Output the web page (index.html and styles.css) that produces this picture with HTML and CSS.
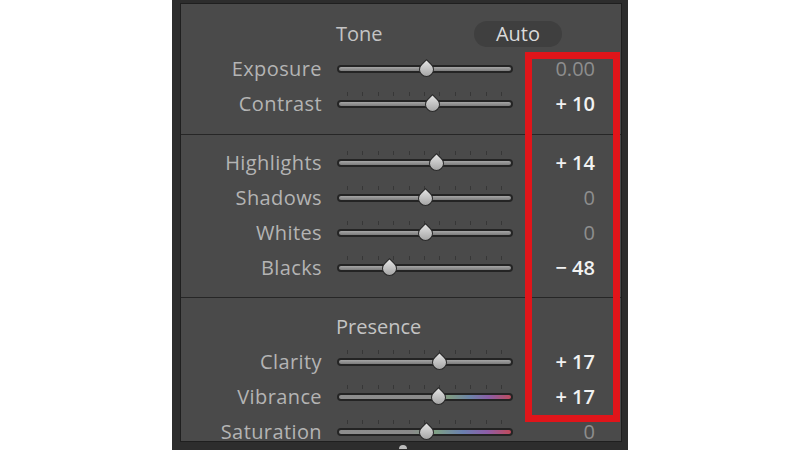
FILE: index.html
```html
<!DOCTYPE html>
<html>
<head>
  <title>Basic Panel</title>
  <link rel="stylesheet" href="styles.css">
</head>
<body>
  <div class="frame">
    <div class="panel">
      <div class="section tone">
        <div class="row header">
          <span class="label"></span>
          <div class="head-title">
            <span>Tone</span>
            <span class="auto">Auto</span>
          </div>
        </div>
        <div class="row">
          <span class="label">Exposure</span>
          <div class="slider"><div class="track"></div><div class="thumb" style="left: 89px"></div></div>
          <span class="value dim">0.00</span>
        </div>
        <div class="row">
          <span class="label">Contrast</span>
          <div class="slider"><div class="ticks"></div><div class="track"></div><div class="thumb" style="left: 95px"></div></div>
          <span class="value">+ 10</span>
        </div>
      </div>

      <div class="section">
        <div class="row">
          <span class="label">Highlights</span>
          <div class="slider"><div class="ticks"></div><div class="track"></div><div class="thumb" style="left: 99px"></div></div>
          <span class="value">+ 14</span>
        </div>
        <div class="row">
          <span class="label">Shadows</span>
          <div class="slider"><div class="ticks"></div><div class="track"></div><div class="thumb" style="left: 88px"></div></div>
          <span class="value dim">0</span>
        </div>
        <div class="row">
          <span class="label">Whites</span>
          <div class="slider"><div class="ticks"></div><div class="track"></div><div class="thumb" style="left: 88px"></div></div>
          <span class="value dim">0</span>
        </div>
        <div class="row">
          <span class="label">Blacks</span>
          <div class="slider"><div class="ticks"></div><div class="track"></div><div class="thumb" style="left: 52px"></div></div>
          <span class="value">&minus; 48</span>
        </div>
      </div>

      <div class="section presence">
        <div class="row header">
          <span class="label"></span>
          <div class="head-title"><span>Presence</span></div>
        </div>
        <div class="row">
          <span class="label">Clarity</span>
          <div class="slider"><div class="ticks"></div><div class="track"></div><div class="thumb" style="left: 102px"></div></div>
          <span class="value">+ 17</span>
        </div>
        <div class="row">
          <span class="label">Vibrance</span>
          <div class="slider"><div class="ticks"></div><div class="track vibrance"></div><div class="thumb" style="left: 101px"></div></div>
          <span class="value">+ 17</span>
        </div>
        <div class="row">
          <span class="label">Saturation</span>
          <div class="slider"><div class="ticks"></div><div class="track saturation"></div><div class="thumb" style="left: 89px"></div></div>
          <span class="value dim">0</span>
        </div>
      </div>
    </div>
    <div class="peek"></div>
    <!-- highlight box drawn over the values column -->
    <div class="mark"></div>
  </div>
</body>
</html>
```

FILE: styles.css
```css
body {
  margin: 0;
  background-color: #ffffff;
  display: flex;
  justify-content: center;
  font-family: "Open Sans", "Noto Sans", sans-serif;
}

.frame {
  position: relative;
  width: 456px;
  height: 450px;
  box-sizing: border-box;
  padding: 3px 6px 0 8px;
  background-color: #2d2d2d;
}

.panel {
  height: 439px;
  box-sizing: border-box;
  border: 1px solid #1f1f1f;
  background-color: #4a4a4a;
}

.section {
  padding: 10px 0 12px;
  border-bottom: 1px solid #262626;
}

.section.tone {
  padding: 12px 0 13px;
}

.section.presence {
  padding-top: 11px;
  border-bottom: none;
}

.row {
  display: flex;
  align-items: center;
  height: 35px;
  line-height: 16px;
}

.label {
  width: 141px;
  flex-shrink: 0;
  text-align: right;
  font-size: 20px;
  letter-spacing: 0.4px;
  color: #b4b4b4;
}

.head-title {
  display: flex;
  align-items: center;
  justify-content: space-between;
  width: 226px;
  margin-left: 14px;
  font-size: 20px;
  color: #c4c4c4;
}

.auto {
  width: 88px;
  height: 26px;
  line-height: 26px;
  border-radius: 13px;
  background-color: #3f3f3f;
  text-align: center;
  color: #dadada;
}

.slider {
  position: relative;
  width: 176px;
  height: 35px;
  margin-left: 15px;
  flex-shrink: 0;
}

.track {
  position: absolute;
  left: 0;
  right: 0;
  top: 14px;
  height: 4px;
  border: 2px solid #242424;
  border-radius: 5px;
  background: linear-gradient(#a6a6a6, #7c7c7c);
}

.track.vibrance {
  background: linear-gradient(to right, #8e8e8e 0%, #8a8a8a 52%, #7f9a82 64%, #6c84a8 76%, #8b5ea6 87%, #bf4c5e 100%);
}

.track.saturation {
  background: linear-gradient(to right, #8e8e8e 0%, #8a8a8a 42%, #7fa084 56%, #6a80b0 72%, #8d5ea8 86%, #c24a5a 100%);
}

.ticks {
  position: absolute;
  left: 10px;
  top: 6px;
  width: 155px;
  height: 4px;
  background: repeating-linear-gradient(to right, #373737 0 1px, transparent 1px 15.4px);
}

.thumb {
  position: absolute;
  top: 11px;
  width: 13px;
  height: 13px;
  margin-left: -7.5px;
  border: 1px solid #2a2a2a;
  border-radius: 0 50% 50% 50%;
  background: linear-gradient(to bottom right, #e4e4e4, #9c9c9c);
  transform: rotate(45deg);
}

.value {
  width: 82px;
  flex-shrink: 0;
  text-align: right;
  font-size: 20px;
  font-weight: 600;
  color: #f2f2f2;
}

.value.dim {
  font-weight: 400;
  color: #8e8e8e;
}

.peek {
  width: 8px;
  height: 4px;
  margin: 3px 0 0 219px;
  border-radius: 4px 4px 0 0;
  background-color: #bdbdbd;
}

.mark {
  position: absolute;
  left: 353px;
  top: 52px;
  width: 81px;
  height: 356px;
  border: 7px solid #e0151a;
}
```
